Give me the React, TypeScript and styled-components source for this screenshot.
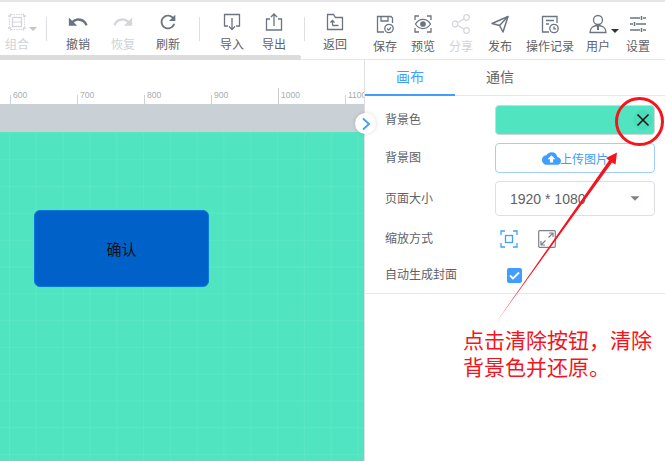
import React from 'react';
import styled, { createGlobalStyle } from 'styled-components';
import { MdUndo, MdRedo, MdRefresh, MdCloudUpload, MdArrowDropDown } from 'react-icons/md';

const GlobalStyle = createGlobalStyle`
  html, body { margin: 0; padding: 0; background: #fff; }
  body { font-family: "Liberation Sans", "Noto Sans CJK SC", sans-serif; }
  * { box-sizing: border-box; }
`;

const Page = styled.div`
  position: relative;
  width: 665px;
  height: 461px;
  overflow: hidden;
  display: flex;
  flex-direction: column;
`;

const Toolbar = styled.div`
  position: relative;
  height: 60px;
  flex: none;
  display: flex;
  align-items: flex-start;
  border-top: 2px solid #e6e6e6;
  border-bottom: 1px solid #e4e7ed;
  padding-top: 9px;
`;

const Scrollbar = styled.div`
  position: absolute;
  left: 0;
  bottom: -1px;
  width: 301px;
  height: 5px;
  background: #dcdcdc;
  border-radius: 0 2px 2px 0;
`;

const ToolItem = styled.div<{ $w: number; $left?: number; $disabled?: boolean; $drop?: number }>`
  flex: none;
  width: ${p => p.$w}px;
  margin-left: ${p => p.$left ?? 0}px;
  margin-top: ${p => p.$drop ?? 0}px;
  display: flex;
  flex-direction: column;
  align-items: center;
  gap: 5px;
  font-size: 12px;
  line-height: 14px;
  white-space: nowrap;
  color: ${p => (p.$disabled ? '#d0d2d6' : '#606266')};
`;

const ToolIcon = styled.div<{ $disabled?: boolean }>`
  position: relative;
  width: 22px;
  height: 22px;
  display: flex;
  align-items: center;
  justify-content: center;
  color: ${p => (p.$disabled ? '#d4d6da' : '#6b7480')};
`;

const Caret = styled.span<{ $dark?: boolean }>`
  position: absolute;
  left: 100%;
  bottom: 2px;
  margin-left: ${p => (p.$dark ? 2 : 1)}px;
  border-style: solid;
  border-width: 4px 4px 0;
  border-color: ${p => (p.$dark ? '#333' : '#c4c6ca')} transparent transparent;
`;

const Divider = styled.div<{ $left: number }>`
  flex: none;
  width: 1px;
  height: 24px;
  margin: 6px 0 0 ${p => p.$left}px;
  background: #dcdfe6;
`;

const Body = styled.div`
  flex: 1;
  min-height: 0;
  display: flex;
`;

const CanvasArea = styled.div`
  position: relative;
  width: 364px;
  flex: none;
  display: flex;
  flex-direction: column;
  overflow: hidden;
`;

const Ruler = styled.div`
  height: 44px;
  flex: none;
  display: flex;
  align-items: flex-end;
  padding-left: 10px;
  background: #fff;
`;

const RulerCell = styled.div<{ $tall?: boolean }>`
  flex: none;
  width: 67px;
  height: ${p => (p.$tall ? 16 : 9)}px;
  padding-left: 2px;
  display: flex;
  align-items: flex-end;
  border-left: 1px solid ${p => (p.$tall ? '#c8ccd0' : '#d0d3d6')};
  font-size: 8.5px;
  line-height: 10px;
  color: #a8acb0;
  span { margin-bottom: 4px; }
`;

const GrayBand = styled.div`
  height: 28px;
  flex: none;
  background: #c9d0d6;
`;

const Stage = styled.div`
  position: relative;
  flex: 1;
  background-color: #50e5c0;
  background-image:
    linear-gradient(to right, rgba(255, 255, 255, 0.06) 1px, transparent 1px),
    linear-gradient(to bottom, rgba(255, 255, 255, 0.06) 1px, transparent 1px);
  background-size: 26.8px 26.8px;
  background-position: 9px 0.5px;
`;

const ConfirmButton = styled.div`
  position: absolute;
  left: 34px;
  top: 78px;
  width: 175px;
  height: 77px;
  display: flex;
  align-items: center;
  justify-content: center;
  background: #0062c8;
  border: 1px solid #0a78dc;
  border-radius: 6px;
  font-size: 15px;
  color: #111;
`;

const Panel = styled.div`
  flex: 1;
  border-left: 1px solid #dcdfe6;
  background: #fff;
`;

const Tabs = styled.div`
  height: 36px;
  display: flex;
  border-bottom: 1px solid #e4e7ed;
`;

const Tab = styled.div<{ $active?: boolean }>`
  width: 90px;
  height: 36px;
  display: flex;
  align-items: center;
  justify-content: center;
  padding-bottom: 3px;
  font-size: 14px;
  color: ${p => (p.$active ? '#409eff' : '#606266')};
  border-bottom: 2px solid ${p => (p.$active ? '#409eff' : 'transparent')};
`;

const Form = styled.div`
  display: flex;
  flex-direction: column;
  padding: 9px 10px 3px 20px;
  border-bottom: 1px solid #e4e7ed;
`;

const Row = styled.div<{ $h?: number; $gap?: number }>`
  height: ${p => p.$h ?? 30}px;
  margin-bottom: ${p => p.$gap ?? 8}px;
  display: flex;
  align-items: center;
`;

const Label = styled.div<{ $w?: number }>`
  width: ${p => p.$w ?? 110}px;
  flex: none;
  margin-top: -3px;
  font-size: 12px;
  color: #606266;
  white-space: nowrap;
`;

const Swatch = styled.div`
  width: 160px;
  height: 30px;
  display: flex;
  align-items: center;
  justify-content: flex-end;
  background: #50e5c0;
  border: 1px solid #d0d8da;
  border-radius: 4px;
`;

const ClearButton = styled.div`
  width: 20px;
  height: 20px;
  margin-right: 1px;
  display: flex;
  align-items: center;
  justify-content: center;
  background: #4cdcb9;
  border-radius: 50%;
`;

const UploadButton = styled.div`
  width: 160px;
  height: 30px;
  display: flex;
  align-items: center;
  justify-content: center;
  border: 1px solid #a0cfff;
  border-radius: 4px;
  font-size: 12px;
  color: #409eff;
  svg { margin-right: -1px; }
`;

const Select = styled.div`
  width: 160px;
  height: 35px;
  padding: 0 14px;
  display: flex;
  align-items: center;
  justify-content: space-between;
  border: 1px solid #dcdfe6;
  border-radius: 4px;
  font-size: 14px;
  color: #606266;
  svg { margin-right: -6px; margin-top: -2px; color: #808388; }
`;

const ScaleIcons = styled.div`
  display: flex;
  gap: 20px;
  margin-left: 5px;
`;

const Checkbox = styled.div`
  width: 15px;
  height: 15px;
  margin-left: 12px;
  display: flex;
  align-items: center;
  justify-content: center;
  background: #409eff;
  border-radius: 2px;
`;

const CollapseToggle = styled.div`
  position: absolute;
  left: 355px;
  top: 113px;
  width: 21px;
  height: 21px;
  display: flex;
  align-items: center;
  justify-content: center;
  background: #fff;
  border-radius: 50%;
  box-shadow: 0 0 4px rgba(0, 0, 0, 0.15);
`;

const RedRing = styled.div`
  position: absolute;
  left: 615px;
  top: 97px;
  width: 49px;
  height: 49px;
  border: 3px solid #f5141c;
  border-radius: 50%;
`;

const ArrowOverlay = styled.svg`
  position: absolute;
  left: 0;
  top: 0;
  pointer-events: none;
`;

const Note = styled.div`
  position: absolute;
  left: 463px;
  top: 327px;
  width: 195px;
  font-size: 21px;
  line-height: 27px;
  color: #f5141c;
`;

const Line = (p: React.SVGProps<SVGSVGElement>) => (
  <svg width="22" height="22" viewBox="0 0 22 22" fill="none" stroke="currentColor" strokeWidth="1.3" {...p} />
);

const GroupIcon = () => (
  <Line>
    <path d="M2 5h2.500V2.500M2 17h2.500v2.500M20 5h-2.500V2.500M20 17h-2.500v2.500" />
    <path d="M5 3.500h12M5 18.500h12M3.500 5v12M18.500 5v12" strokeDasharray="1.500 1" strokeWidth="1" />
    <rect x="6.500" y="6.500" width="9" height="9" />
    <path d="M6.500 11h9" strokeWidth="1" />
  </Line>
);

const ImportIcon = () => (
  <Line>
    <path d="M7 15H3.500V3.500h15V15H15" />
    <path d="M11 7v11M8 15.500l3 3 3-3" />
  </Line>
);

const ExportIcon = () => (
  <Line>
    <path d="M7 8H3.500v11h15V8H15" />
    <path d="M11 15V3M8 6l3-3 3 3" />
  </Line>
);

const BackIcon = () => (
  <Line>
    <path d="M3.500 18.500V3.500h6l2 3h7v12z" />
    <path d="M14.500 14.500h-6M8.500 14.500V9.500M6.500 11.500l2-2 2 2" />
  </Line>
);

const SaveIcon = () => (
  <Line>
    <path d="M10 19H3.500V3.500h13.500l1.500 1.500V10" />
    <path d="M7 4v4h7V4" />
    <circle cx="15" cy="15.500" r="4.200" />
    <path d="M13 15.500l1.600 1.500 2.400-2.600" />
  </Line>
);

const PreviewIcon = () => (
  <Line>
    <path d="M3 7V3h4M15 3h4v4M19 15v4h-4M7 19H3v-4" />
    <path d="M3.500 11c2-3.200 4.500-4.600 7.500-4.600s5.500 1.400 7.500 4.600c-2 3.200-4.500 4.600-7.500 4.600S5.500 14.200 3.500 11z" />
    <circle cx="11" cy="11" r="2.200" fill="currentColor" />
  </Line>
);

const ShareIcon = () => (
  <Line strokeWidth="1.200">
    <circle cx="5" cy="11" r="2.800" />
    <circle cx="16.500" cy="4.500" r="2.800" />
    <circle cx="16.500" cy="17.500" r="2.800" />
    <path d="M7.500 9.600l6.600-3.700M7.500 12.400l6.600 3.700" />
  </Line>
);

const SendIcon = () => (
  <Line strokeWidth="1.500">
    <path d="M3 10.500L19 3.500l-5 15.500-3.500-6.500z" strokeLinejoin="round" />
    <path d="M10.500 12.500L19 3.500" />
  </Line>
);

const RecordIcon = () => (
  <Line>
    <path d="M10 19H3.500V3.500h14.500V10" />
    <path d="M7 7.500h8M7 11h3" />
    <circle cx="15" cy="15.500" r="4.200" />
    <path d="M15 13.500v2.300h2" />
  </Line>
);

const UserIcon = () => (
  <Line>
    <circle cx="11" cy="7" r="4.500" />
    <path d="M3 19.500c0-4.500 3.500-7 8-7s8 2.500 8 7z" />
    <path d="M11 13v4" strokeWidth="2" />
  </Line>
);

const SettingsIcon = () => (
  <Line strokeWidth="1.500">
    <path d="M3 5h10M16 5h3M3 11h3M9 11h10M3 17h10M16 17h3" />
    <path d="M14.500 3v4M7.500 9v4M14.500 15v4" />
  </Line>
);

const FitIcon = () => (
  <svg width="18" height="18" viewBox="0 0 18 18" fill="none" stroke="#409eff" strokeWidth="1.300">
    <path d="M1 5V1h4M13 1h4v4M17 13v4h-4M5 17H1v-4" />
    <rect x="5.500" y="5.500" width="7" height="7" />
  </svg>
);

const StretchIcon = () => (
  <svg width="18" height="18" viewBox="0 0 18 18" fill="none" stroke="#7d8288" strokeWidth="1.200">
    <rect x="0.700" y="0.700" width="16.600" height="16.600" rx="1" />
    <path d="M10.500 7.500L15 3M11 3h4v4M7.500 10.500L3 15M3 11v4h4" />
  </svg>
);

const rulerMarks = [600, 700, 800, 900, 1000, 1100];

const App: React.FC = () => (
  <Page>
    <GlobalStyle />
    <Toolbar>
      <ToolItem $w={34} $disabled>
        <ToolIcon $disabled>
          <GroupIcon />
          <Caret />
        </ToolIcon>
        组合
      </ToolItem>
      <Divider $left={12} />
      <ToolItem $w={44} $left={9}>
        <ToolIcon><MdUndo size={24} /></ToolIcon>
        撤销
      </ToolItem>
      <ToolItem $w={44} $left={1} $disabled>
        <ToolIcon $disabled><MdRedo size={24} /></ToolIcon>
        恢复
      </ToolItem>
      <ToolItem $w={44} $left={1}>
        <ToolIcon><MdRefresh size={26} /></ToolIcon>
        刷新
      </ToolItem>
      <Divider $left={9} />
      <ToolItem $w={42} $left={11}>
        <ToolIcon><ImportIcon /></ToolIcon>
        导入
      </ToolItem>
      <ToolItem $w={42}>
        <ToolIcon><ExportIcon /></ToolIcon>
        导出
      </ToolItem>
      <Divider $left={9} />
      <ToolItem $w={40} $left={10}>
        <ToolIcon><BackIcon /></ToolIcon>
        返回
      </ToolItem>
      <ToolItem $w={38} $left={11} $drop={2}>
        <ToolIcon><SaveIcon /></ToolIcon>
        保存
      </ToolItem>
      <ToolItem $w={38} $drop={2}>
        <ToolIcon><PreviewIcon /></ToolIcon>
        预览
      </ToolItem>
      <ToolItem $w={38} $drop={2} $disabled>
        <ToolIcon $disabled><ShareIcon /></ToolIcon>
        分享
      </ToolItem>
      <ToolItem $w={38} $left={1} $drop={2}>
        <ToolIcon><SendIcon /></ToolIcon>
        发布
      </ToolItem>
      <ToolItem $w={50} $left={6} $drop={2}>
        <ToolIcon><RecordIcon /></ToolIcon>
        操作记录
      </ToolItem>
      <ToolItem $w={38} $left={4} $drop={2}>
        <ToolIcon>
          <UserIcon />
          <Caret $dark />
        </ToolIcon>
        用户
      </ToolItem>
      <ToolItem $w={38} $left={2} $drop={2}>
        <ToolIcon><SettingsIcon /></ToolIcon>
        设置
      </ToolItem>
      <Scrollbar />
    </Toolbar>
    <Body>
      <CanvasArea>
        <Ruler>
          {rulerMarks.map(mark => (
            <RulerCell key={mark} $tall={mark === 1000}>
              <span>{mark}</span>
            </RulerCell>
          ))}
        </Ruler>
        <GrayBand />
        <Stage>
          <ConfirmButton>确认</ConfirmButton>
        </Stage>
      </CanvasArea>
      <Panel>
        <Tabs>
          <Tab $active>画布</Tab>
          <Tab>通信</Tab>
        </Tabs>
        <Form>
          <Row>
            <Label>背景色</Label>
            <Swatch>
              <ClearButton>
                <svg width="14" height="14" viewBox="0 0 14 14" stroke="#111" strokeWidth="1.500">
                  <path d="M1.500 1.500l11 11M12.500 1.500l-11 11" />
                </svg>
              </ClearButton>
            </Swatch>
          </Row>
          <Row>
            <Label>背景图</Label>
            <UploadButton>
              <MdCloudUpload size={19} />
              上传图片
            </UploadButton>
          </Row>
          <Row $h={35}>
            <Label>页面大小</Label>
            <Select>
              1920 * 1080
              <MdArrowDropDown size={22} />
            </Select>
          </Row>
          <Row $gap={6}>
            <Label>缩放方式</Label>
            <ScaleIcons>
              <FitIcon />
              <StretchIcon />
            </ScaleIcons>
          </Row>
          <Row $gap={0}>
            <Label>自动生成封面</Label>
            <Checkbox>
              <svg width="11" height="9" viewBox="0 0 11 9" fill="none" stroke="#fff" strokeWidth="1.800">
                <path d="M1 4.500l3 3 6-6" />
              </svg>
            </Checkbox>
          </Row>
        </Form>
      </Panel>
    </Body>
    <CollapseToggle>
      <svg width="10" height="14" viewBox="0 0 10 14" fill="none" stroke="#409eff" strokeWidth="1.800">
        <path d="M2 1.500L8 7l-6 5.500" />
      </svg>
    </CollapseToggle>
    <RedRing />
    <ArrowOverlay width="665" height="461" viewBox="0 0 665 461">
      <path d="M617 152.500L606 158L609 160.500L496.500 322L612 162.500L615.500 164.500z" fill="#f5141c" />
    </ArrowOverlay>
    <Note>点击清除按钮，清除背景色并还原。</Note>
  </Page>
);

export default App;
